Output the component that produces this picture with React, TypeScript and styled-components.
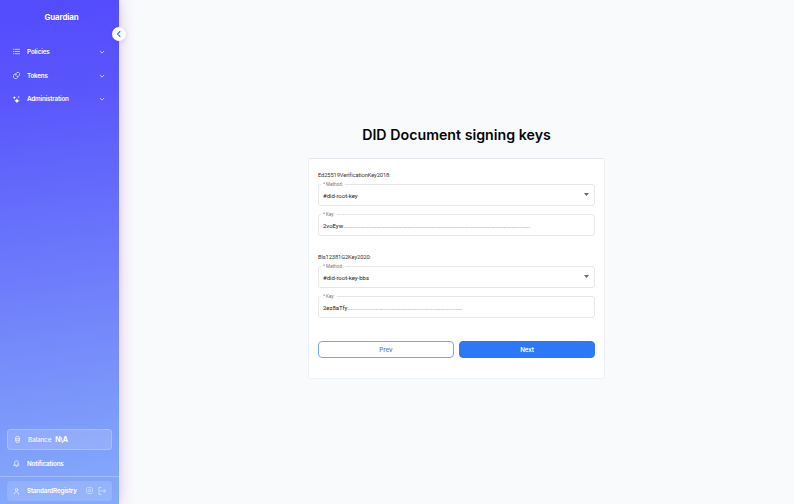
import React from "react";
import styled, { createGlobalStyle } from "styled-components";

const GlobalStyle = createGlobalStyle`
  * { box-sizing: border-box; }
  body { margin: 0; background: #f9fafc; }
`;

const Page = styled.div`
  display: flex;
  width: 794px;
  height: 504px;
  overflow: hidden;
  background: #f9fafc;
  font-family: Inter, sans-serif;
`;

const Sidebar = styled.aside`
  position: relative;
  display: flex;
  flex-direction: column;
  width: 119px;
  height: 504px;
  flex: none;
  color: #fff;
  background: linear-gradient(172deg, #544dfd 4%, #5956fc 19%, #7e9cfa 84%, #85abfa 100%);
  box-shadow: 0 0 14px rgba(135, 60, 190, 0.32);
`;

const Brand = styled.div`
  height: 40px;
  padding: 12px 0 0 4px;
  font-size: 7.9px;
  line-height: 10px;
  font-weight: 700;
  letter-spacing: -0.1px;
  text-align: center;
`;

const CollapseButton = styled.button`
  position: absolute;
  top: 26.5px;
  left: 111.5px;
  display: flex;
  align-items: center;
  justify-content: center;
  width: 14px;
  height: 14px;
  padding: 0;
  border: 0;
  border-radius: 50%;
  background: #fff;
  color: #2c78f6;
  box-shadow: 0 1px 4px rgba(60, 40, 140, 0.16);
`;

const Menu = styled.nav`
  flex: 1;
`;

const MenuItem = styled.div`
  display: flex;
  align-items: center;
  height: 23.8px;
  padding: 0 14px 0 13px;
`;

const MenuLabel = styled.span<{ $spacing?: number }>`
  flex: 1;
  margin-left: 7px;
  font-size: 6.3px;
  line-height: 10px;
  font-weight: 600;
  white-space: nowrap;
  letter-spacing: ${(p) => p.$spacing ?? -0.13}px;
`;

const BalanceBox = styled.div`
  display: flex;
  align-items: center;
  height: 21px;
  margin: 0 7px;
  padding: 0 6px;
  border: 1px solid rgba(255, 255, 255, 0.22);
  border-radius: 4px;
  background: rgba(255, 255, 255, 0.15);
  font-size: 6.4px;
  font-weight: 500;
`;

const BalanceLabel = styled.span`
  margin-left: 7px;
  letter-spacing: -0.16px;
  opacity: 0.9;
`;

const BalanceValue = styled.strong`
  margin-left: 4px;
  font-size: 7px;
  font-weight: 700;
  letter-spacing: -0.35px;
`;

const Notifications = styled.div`
  display: flex;
  align-items: center;
  height: 26px;
  padding: 1px 13px 0;
`;

const Footer = styled.footer`
  height: 28px;
  padding-top: 4px;
  border-top: 1px solid rgba(255, 255, 255, 0.25);
`;

const UserBox = styled.div`
  display: flex;
  align-items: center;
  height: 20px;
  margin: 0 7px;
  padding: 0 6px;
  border-radius: 4px;
  background: rgba(255, 255, 255, 0.14);
`;

const UserActions = styled.div`
  display: flex;
  gap: 5px;
  opacity: 0.65;
`;

const Main = styled.main`
  display: flex;
  flex: 1;
  flex-direction: column;
  align-items: center;
`;

const Title = styled.h1`
  height: 20px;
  margin: 125px 0 13px;
  color: #050505;
  font-size: 14.2px;
  line-height: 20px;
  font-weight: 600;
  letter-spacing: 0.02px;
  white-space: nowrap;
`;

const Card = styled.section`
  width: 297px;
  height: 221px;
  padding: 11px 9px 0;
  border: 1px solid #eff2f5;
  border-top-color: #e2e7ee;
  border-radius: 3px;
  background: #fff;
  font-family: Roboto, sans-serif;
`;

const KeyGroup = styled.div`
  height: 82px;
`;

const GroupName = styled.div`
  height: 14px;
  color: #333;
  font-size: 5.7px;
  line-height: 11px;
  white-space: nowrap;
  letter-spacing: -0.08px;
`;

const Field = styled.div`
  position: relative;
  display: flex;
  align-items: center;
  height: 22px;
  margin-bottom: 8px;
  padding: 1px 5px 0 4px;
  border: 1px solid #e7e7e7;
  border-radius: 3px;
  color: #222;
  font-size: 6px;
`;

const FieldLabel = styled.span`
  position: absolute;
  top: -4px;
  left: 2px;
  padding: 0 2px;
  background: #fff;
  color: #777;
  font-size: 4.6px;
  line-height: 7px;
`;

const FieldValue = styled.span`
  flex: 1;
  white-space: nowrap;
  letter-spacing: -0.03px;
`;

const Dots = styled.span<{ $color: string }>`
  color: ${(p) => p.$color};
  letter-spacing: -0.01px;
`;

const Arrow = styled.svg`
  width: 5px;
  height: 3px;
  margin-bottom: 2px;
  fill: #666;
`;

const Actions = styled.div`
  display: flex;
  gap: 5px;
  padding-top: 7px;
`;

const Button = styled.button<{ $primary?: boolean }>`
  flex: 1;
  height: 17px;
  padding: 0;
  border: 1px solid ${(p) => (p.$primary ? "#2c78f6" : "#78a6f5")};
  border-radius: 4px;
  background: ${(p) => (p.$primary ? "#2c78f6" : "#fff")};
  color: ${(p) => (p.$primary ? "#fff" : "#6870f2")};
  font-family: Inter, sans-serif;
  font-size: 6.2px;
  font-weight: ${(p) => (p.$primary ? 600 : 500)};
  letter-spacing: ${(p) => (p.$primary ? -0.1 : 0)}px;
`;

const iconPaths = {
  list: "M5 3h10M5 8h10M5 13h10M1 3h1M1 8h1M1 13h1",
  tokens: "M7 5H3L1 8v4l3 3h4l3-3v-1M7 5V3l2-2h4l2 2v4l-3 3H9L7 8Z",
  down: "m3 6 5 5 5-5",
  left: "m10 3-5 5 5 5",
  coins: "M4 3c0-3 8-3 8 0v10c0 3-8 3-8 0ZM4 5c1 3 7 3 8 0M4 9c1 3 7 3 8 0",
  bell: "M2 12h12l-2-2V6c0-6-8-6-8 0v4ZM7 15h2",
  user: "M11 4a3 3 0 1 1-6 0 3 3 0 0 1 6 0ZM3 14c0-7 10-7 10 0",
  gear: "M4 1h8l3 3v8l-3 3H4l-3-3V4ZM11 8a3 3 0 1 1-6 0 3 3 0 0 1 6 0",
  logout: "M6 1H2v14h4M6 8h9m-3-3 3 3-3 3",
};

function Icon({ name, size = 7, weight = 1.5 }: { name: keyof typeof iconPaths; size?: number; weight?: number }) {
  return (
    <svg width={size} height={size} viewBox="0 0 16 16" fill="none" stroke="currentColor" strokeWidth={weight} strokeLinecap="round" strokeLinejoin="round">
      <path d={iconPaths[name]} />
    </svg>
  );
}

function SparkIcon() {
  return (
    <svg width="7" height="7" viewBox="0 0 16 16" fill="currentColor">
      <path d="m9 5 2 4 4 2-4 2-2 3-2-3-4-2 4-2ZM3 0l1 2.5L6.5 4 4 5 3 8 2 5 0 4l2-1.5ZM13 0l.8 1.5 2 .8-2 .8L13 5l-.8-1.9-2-.8 2-.8Z" />
    </svg>
  );
}

function KeyFields({ type, method, value, dots, color }: { type: string; method: string; value: string; dots: number; color: string }) {
  return (
    <KeyGroup>
      <GroupName>{type}</GroupName>
      <Field>
        <FieldLabel>* Method:</FieldLabel>
        <FieldValue>{method}</FieldValue>
        <Arrow viewBox="0 0 5 3"><path d="M0 0h5L2.5 3Z" /></Arrow>
      </Field>
      <Field>
        <FieldLabel>* Key:</FieldLabel>
        <FieldValue>
          {value}
          <Dots $color={color}>{".".repeat(dots)}</Dots>
        </FieldValue>
      </Field>
    </KeyGroup>
  );
}

export default function App() {
  return (
    <>
      <GlobalStyle />
      <Page>
        <Sidebar>
          <Brand>Guardian</Brand>
          <Menu>
            <MenuItem><Icon name="list" /><MenuLabel>Policies</MenuLabel><Icon name="down" size={6} weight={2} /></MenuItem>
            <MenuItem><Icon name="tokens" /><MenuLabel $spacing={-0.2}>Tokens</MenuLabel><Icon name="down" size={6} weight={2} /></MenuItem>
            <MenuItem><SparkIcon /><MenuLabel $spacing={-0.2}>Administration</MenuLabel><Icon name="down" size={6} weight={2} /></MenuItem>
          </Menu>
          <BalanceBox>
            <Icon name="coins" />
            <BalanceLabel>Balance</BalanceLabel>
            <BalanceValue>N\A</BalanceValue>
          </BalanceBox>
          <Notifications><Icon name="bell" /><MenuLabel $spacing={-0.18}>Notifications</MenuLabel></Notifications>
          <Footer>
            <UserBox>
              <Icon name="user" />
              <MenuLabel $spacing={-0.2}>StandardRegistry</MenuLabel>
              <UserActions><Icon name="gear" /><Icon name="logout" size={8} /></UserActions>
            </UserBox>
          </Footer>
          <CollapseButton aria-label="Collapse menu"><Icon name="left" size={8} weight={2.2} /></CollapseButton>
        </Sidebar>
        <Main>
          <Title>DID Document signing keys</Title>
          <Card>
            <KeyFields type="Ed25519VerificationKey2018:" method="#did-root-key" value="2voEyw" dots={119} color="#222" />
            <KeyFields type="Bls12381G2Key2020:" method="#did-root-key-bbs" value="2ez8aTfy" dots={73} color="#222" />
            <Actions>
              <Button>Prev</Button>
              <Button $primary>Next</Button>
            </Actions>
          </Card>
        </Main>
      </Page>
    </>
  );
}
